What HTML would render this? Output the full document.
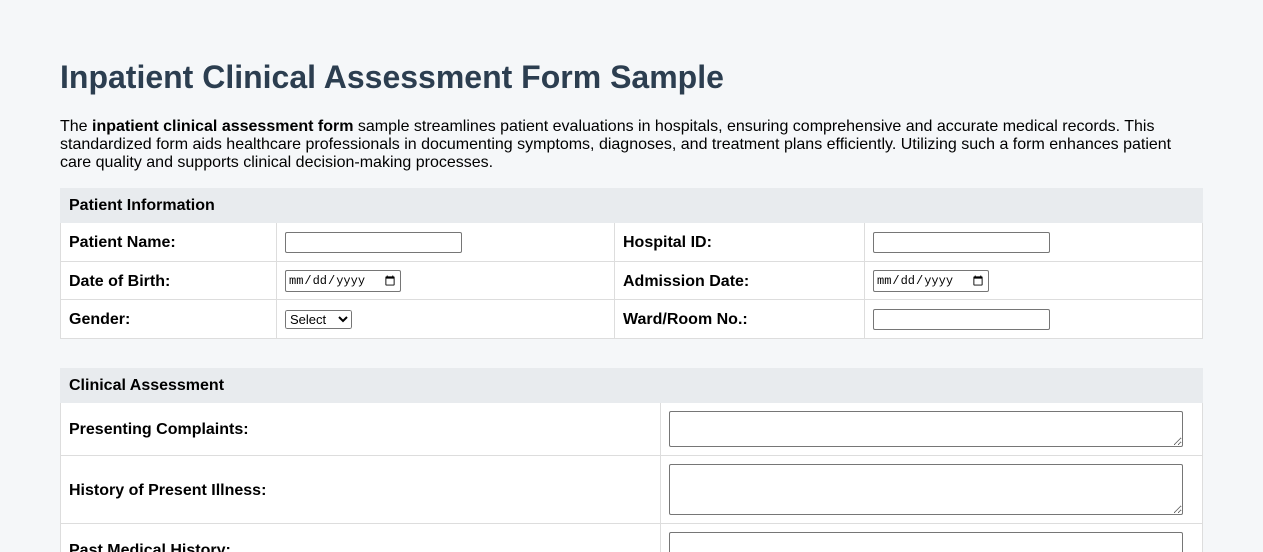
<!DOCTYPE html>
<html style="overflow:hidden;height:552px"><head><style>
body{margin:0;background:#f5f7f9;font-family:"Liberation Sans",Arial,sans-serif;color:#000;width:1263px;height:552px;overflow:hidden;position:relative}
h1{position:absolute;left:60px;top:59px;margin:0;font-size:32px;color:#2c3e50;font-weight:bold}
p{position:absolute;left:60px;top:118px;width:1130px;margin:0;font-size:16px;line-height:18px}
table{position:absolute;left:60px;width:1142px;border-collapse:collapse;background:#fff;table-layout:fixed}
td,th{border:1px solid #ddd;font-size:16px;padding:0 8px;box-sizing:border-box}
th{background:#e8ebee;text-align:left;height:34px;border-color:#e8ebee;font-weight:bold}
td.l{font-weight:bold;padding-top:2px}
input[type=text]{width:177px;height:21px;box-sizing:border-box;border:1px solid #767676;border-radius:2px;margin:0}
input[type=date]{font-size:12px;width:116px;height:22px;box-sizing:border-box;border:1px solid #767676;border-radius:2px;padding:0 2px}
select{font-size:13px;height:19px;width:67px}
textarea{display:block;width:514px;box-sizing:border-box;border:1px solid #767676;border-radius:2px;margin:0}
</style></head><body>
<h1>Inpatient Clinical Assessment Form Sample</h1>
<p>The <b>inpatient clinical assessment form</b> sample streamlines patient evaluations in hospitals, ensuring comprehensive and accurate medical records. This standardized form aids healthcare professionals in documenting symptoms, diagnoses, and treatment plans efficiently. Utilizing such a form enhances patient care quality and supports clinical decision-making processes.</p>
<table style="top:188px">
<colgroup><col style="width:216px"><col style="width:338px"><col style="width:250px"><col style="width:338px"></colgroup>
<tr><th colspan="4">Patient Information</th></tr>
<tr style="height:39px"><td class="l">Patient Name:</td><td><input type="text"></td><td class="l">Hospital ID:</td><td><input type="text"></td></tr>
<tr style="height:38px"><td class="l">Date of Birth:</td><td><input type="date"></td><td class="l">Admission Date:</td><td><input type="date"></td></tr>
<tr style="height:39px"><td class="l">Gender:</td><td><select><option>Select</option></select></td><td class="l">Ward/Room No.:</td><td><input type="text"></td></tr>
</table>
<table style="top:368px">
<colgroup><col style="width:600px"><col style="width:542px"></colgroup>
<tr><th colspan="2">Clinical Assessment</th></tr>
<tr style="height:53px"><td class="l">Presenting Complaints:</td><td><textarea style="height:36px"></textarea></td></tr>
<tr style="height:68px"><td class="l">History of Present Illness:</td><td><textarea style="height:51px"></textarea></td></tr>
<tr style="height:52px"><td class="l">Past Medical History:</td><td><textarea style="height:36px"></textarea></td></tr>
</table>
</body></html>
